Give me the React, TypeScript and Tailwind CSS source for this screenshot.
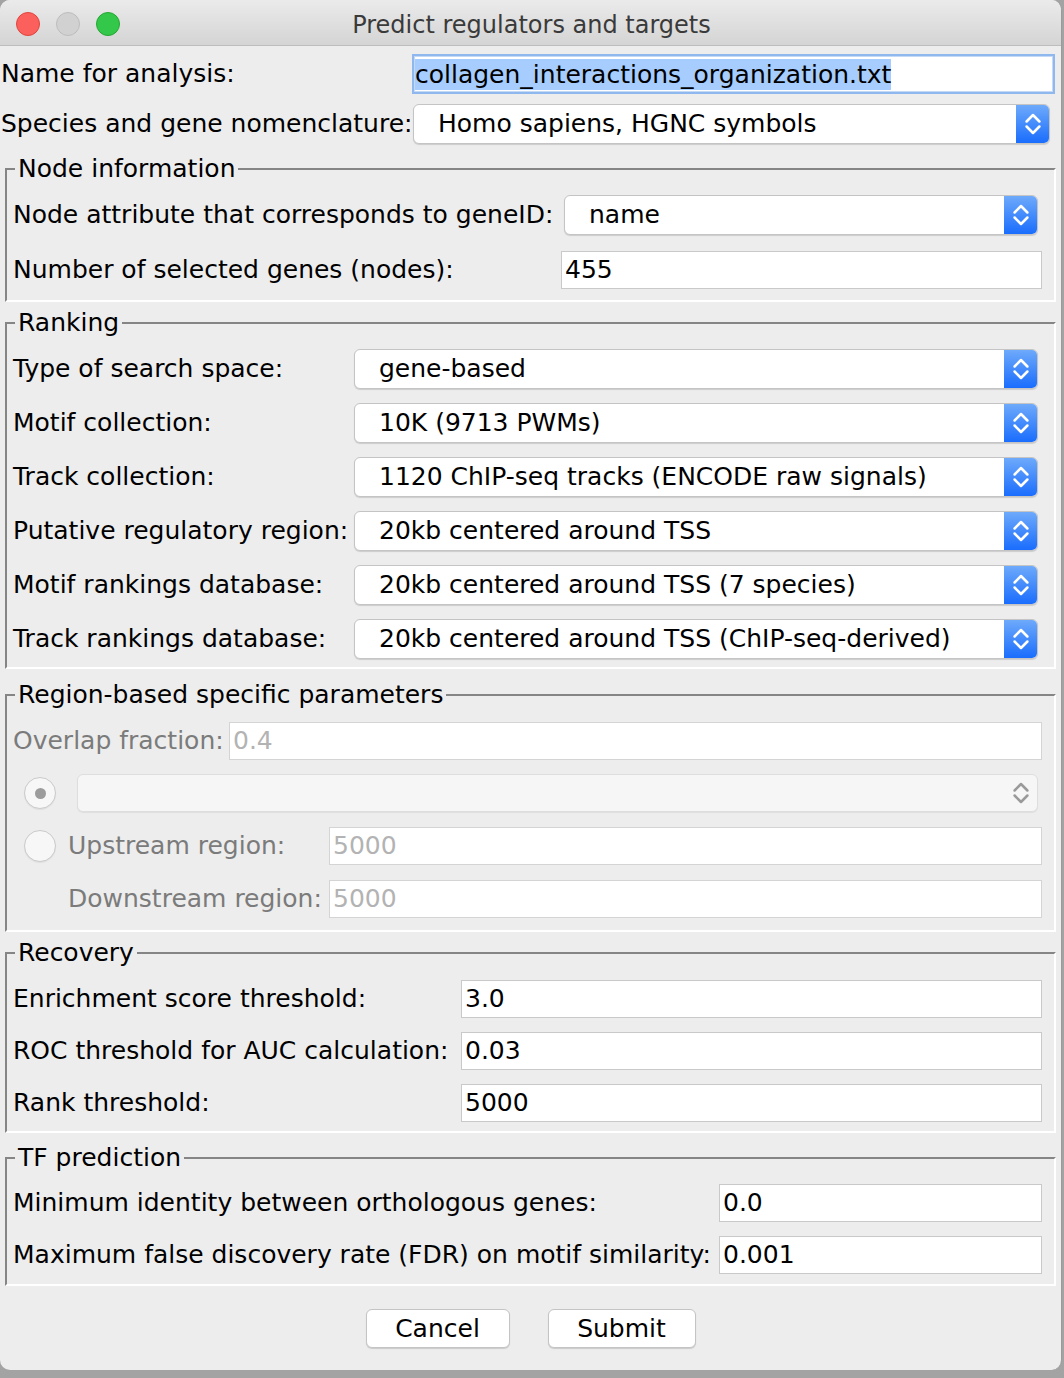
import React from "react";

function Chevrons({ disabled }: { disabled?: boolean }) {
  const c = disabled ? "#9a9a9a" : "#ffffff";
  return (
    <svg width="16" height="22" viewBox="0 0 16 22" fill="none">
      <path d="M1.6 8.5 L8 2 L14.4 8.5" stroke={c} strokeWidth="2.5" strokeLinecap="round" strokeLinejoin="round" />
      <path d="M1.6 13.5 L8 20 L14.4 13.5" stroke={c} strokeWidth="2.5" strokeLinecap="round" strokeLinejoin="round" />
    </svg>
  );
}

function Combo({ value, className = "" }: { value: string; className?: string }) {
  return (
    <div
      className={`h-[40px] flex items-stretch rounded-[6px] border border-[#c4c4c4] bg-white shadow-[0_1px_1px_rgba(0,0,0,0.14)] overflow-hidden ${className}`}
    >
      <div className="flex-1 flex items-center pl-[24px] text-black whitespace-nowrap">{value}</div>
      <div className="w-[33px] flex items-center justify-center bg-[linear-gradient(to_bottom,#6eaafb,#1a6dfd)]">
        <Chevrons />
      </div>
    </div>
  );
}

function DisabledCombo({ className = "" }: { className?: string }) {
  return (
    <div
      className={`h-[38px] flex items-stretch rounded-[6px] border border-[#dedede] bg-[#f6f6f6] shadow-[0_1px_1px_rgba(0,0,0,0.06)] ${className}`}
    >
      <div className="flex-1" />
      <div className="w-[33px] flex items-center justify-center">
        <Chevrons disabled />
      </div>
    </div>
  );
}

function Field({ value, disabled, className = "" }: { value: string; disabled?: boolean; className?: string }) {
  return (
    <div
      className={`h-[38px] flex items-center pl-[3px] bg-white border ${
        disabled ? "border-[#d4d4d4] text-[#b3b3b3]" : "border-[#c9c9c9] text-black"
      } ${className}`}
    >
      {value}
    </div>
  );
}

function Radio({ checked }: { checked?: boolean }) {
  return (
    <div className="w-[32px] h-[32px] rounded-full border border-[#cacaca] bg-[#f7f7f7] shadow-[0_1px_1px_rgba(0,0,0,0.06)] flex items-center justify-center">
      {checked && <div className="w-[11px] h-[11px] rounded-full bg-[#9c9c9c]" />}
    </div>
  );
}

function Group({
  title,
  className = "",
  children,
}: {
  title: string;
  className?: string;
  children: React.ReactNode;
}) {
  return (
    <fieldset
      className={`mx-[5px] border-2 border-t-[#858585] border-l-[#858585] border-b-white border-r-white pl-[6px] pr-[12px] ${className}`}
    >
      <legend className="ml-[2px] px-[3px] leading-[28px] text-black">{title}</legend>
      {children}
    </fieldset>
  );
}

function LabelRow({
  label,
  labelW,
  children,
  h = "h-[54px]",
}: {
  label: string;
  labelW: string;
  children: React.ReactNode;
  h?: string;
}) {
  return (
    <div className={`flex items-center ${h}`}>
      <div className={`${labelW} shrink-0 whitespace-nowrap text-black`}>{label}</div>
      <div className="flex-1 min-w-0">{children}</div>
    </div>
  );
}

export default function App() {
  const ranking: [string, string][] = [
    ["Type of search space:", "gene-based"],
    ["Motif collection:", "10K (9713 PWMs)"],
    ["Track collection:", "1120 ChIP-seq tracks (ENCODE raw signals)"],
    ["Putative regulatory region:", "20kb centered around TSS"],
    ["Motif rankings database:", "20kb centered around TSS (7 species)"],
    ["Track rankings database:", "20kb centered around TSS (ChIP-seq-derived)"],
  ];
  return (
    <div className="w-[1064px] h-[1378px] bg-[#a3a3a3] font-['DejaVu_Sans',sans-serif] text-[25px]">
      <div className="w-[1062px] h-[1370px] rounded-[10px] bg-[#ededed] border-r border-[#9a9a9a] overflow-hidden flex flex-col">
        {/* Title bar */}
        <div className="h-[46px] shrink-0 border-b border-[#bdbdbd] bg-[linear-gradient(to_bottom,#ebebeb,#d4d4d4)] relative flex items-center justify-center pt-[4px]">
          <div className="absolute left-[16px] top-[12px] flex gap-[16px]">
            <div className="w-[24px] h-[24px] rounded-full bg-[#fc605c] border border-[#e0443e]" />
            <div className="w-[24px] h-[24px] rounded-full bg-[#d1d1d1] border border-[#bdbdbd]" />
            <div className="w-[24px] h-[24px] rounded-full bg-[#34c84a] border border-[#25a732]" />
          </div>
          <div className="text-[24px] text-[#3a3a3a] pl-[2px]">Predict regulators and targets</div>
        </div>

        {/* Top rows */}
        <div className="pt-[3px] pl-[1px] pr-[6px]">
          <div className="flex items-center h-[50px]">
            <div className="w-[411px] shrink-0 text-black">Name for analysis:</div>
            <div className="flex-1 h-[40px] border-2 border-[#8fb8ee] bg-white flex items-center pl-[1px] shadow-[inset_0_0_0_1px_#c4d9f5]">
              <span className="bg-[#a6cdfe] text-black leading-[31px]">collagen_interactions_organization.txt</span>
            </div>
          </div>
          <div className="flex items-center h-[50px]">
            <div className="w-[412px] shrink-0 text-black whitespace-nowrap">Species and gene nomenclature:</div>
            <Combo value="Homo sapiens, HGNC symbols" className="flex-1 mr-[5px]" />
          </div>
        </div>

        {/* Node information */}
        <Group title="Node information" className="mt-[6px] pt-[5px] pb-[2px]">
          <LabelRow label="Node attribute that corresponds to geneID:" labelW="w-[548px]">
            <Combo value="name" className="ml-[3px] mr-[4px]" />
          </LabelRow>
          <LabelRow label="Number of selected genes (nodes):" labelW="w-[548px]" h="h-[56px]">
            <Field value="455" />
          </LabelRow>
        </Group>

        {/* Ranking */}
        <Group title="Ranking" className="mt-[7px] pt-[5px] pb-[1px]">
          {ranking.map(([l, v]) => (
            <LabelRow key={l} label={l} labelW="w-[341px]">
              <Combo value={v} className="mr-[4px]" />
            </LabelRow>
          ))}
        </Group>

        {/* Region-based */}
        <Group title="Region-based specific parameters" className="mt-[12px] pt-[6px] pb-[5px]">
          <div className="flex items-center h-[52px]">
            <div className="w-[216px] shrink-0 text-[#7b7b7b] whitespace-nowrap">Overlap fraction:</div>
            <Field value="0.4" disabled className="flex-1" />
          </div>
          <div className="flex items-center h-[52px]">
            <div className="w-[55px] shrink-0 pl-[11px]">
              <Radio checked />
            </div>
            <DisabledCombo className="flex-1 ml-[9px] mr-[4px]" />
          </div>
          <div className="flex items-center h-[54px]">
            <div className="w-[55px] shrink-0 pl-[11px]">
              <Radio />
            </div>
            <div className="w-[261px] shrink-0 text-[#7b7b7b] whitespace-nowrap">Upstream region:</div>
            <Field value="5000" disabled className="flex-1" />
          </div>
          <div className="flex items-center h-[52px]">
            <div className="w-[55px] shrink-0" />
            <div className="w-[261px] shrink-0 text-[#7b7b7b] whitespace-nowrap">Downstream region:</div>
            <Field value="5000" disabled className="flex-1" />
          </div>
        </Group>

        {/* Recovery */}
        <Group title="Recovery" className="mt-[7px] pt-[6px] pb-[2px]">
          <LabelRow label="Enrichment score threshold:" labelW="w-[448px]" h="h-[52px]">
            <Field value="3.0" />
          </LabelRow>
          <LabelRow label="ROC threshold for AUC calculation:" labelW="w-[448px]" h="h-[52px]">
            <Field value="0.03" />
          </LabelRow>
          <LabelRow label="Rank threshold:" labelW="w-[448px]" h="h-[52px]">
            <Field value="5000" />
          </LabelRow>
        </Group>

        {/* TF prediction */}
        <Group title="TF prediction" className="mt-[11px] pt-[5px] pb-[3px]">
          <LabelRow label="Minimum identity between orthologous genes:" labelW="w-[706px]" h="h-[52px]">
            <Field value="0.0" />
          </LabelRow>
          <LabelRow label="Maximum false discovery rate (FDR) on motif similarity:" labelW="w-[706px]" h="h-[52px]">
            <Field value="0.001" />
          </LabelRow>
        </Group>

        {/* Buttons */}
        <div className="mt-[23px] flex justify-center gap-[38px]">
          <button className="w-[144px] h-[39px] rounded-[6px] bg-white border border-[#c4c4c4] shadow-[0_1px_1px_rgba(0,0,0,0.15)] text-black">
            Cancel
          </button>
          <button className="w-[148px] h-[39px] rounded-[6px] bg-white border border-[#c4c4c4] shadow-[0_1px_1px_rgba(0,0,0,0.15)] text-black">
            Submit
          </button>
        </div>
      </div>
    </div>
  );
}
